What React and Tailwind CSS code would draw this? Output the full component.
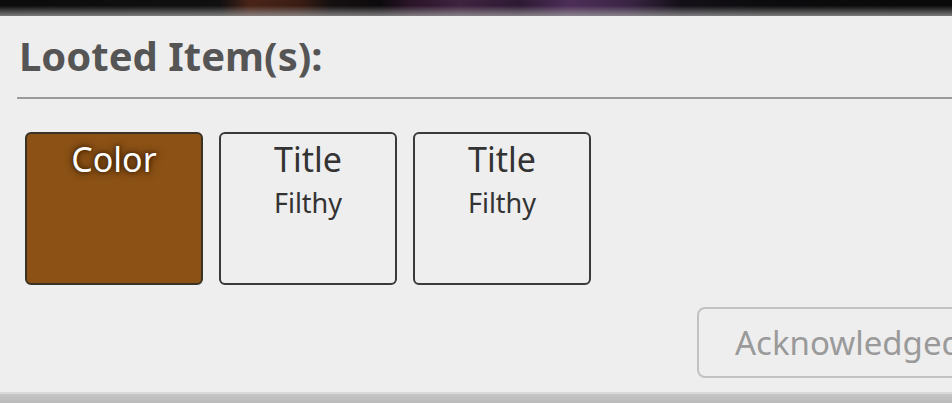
export default function App() {
  const font = "font-['Noto_Sans','Open_Sans',sans-serif]";
  return (
    <div className={`w-[952px] h-[403px] overflow-hidden flex flex-col bg-[#c2c2c2] ${font}`}>
      <div className="h-4 shrink-0 relative bg-[linear-gradient(90deg,#0c0c0c_0px,#101010_220px,#4a2418_250px,#3a1d14_300px,#151010_330px,#0d0a0d_380px,#2a1428_410px,#3f2340_460px,#2e1a34_520px,#4d2e58_570px,#3a2444_630px,#141018_680px,#0c0c0e_760px,#0a0a0a_952px)]">
        <div className="absolute inset-0 bg-[linear-gradient(180deg,rgba(0,0,0,0)_0%,rgba(0,0,0,0)_35%,rgba(160,160,160,0.75)_100%)]" />
      </div>
      <div className="h-[376px] shrink-0 bg-[#eeeeee] flex flex-col">
        <div className="pt-5 pl-[19px] text-[40px] leading-none font-bold text-[#555555] whitespace-nowrap">
          Looted Item(s):
        </div>
        <div className="mt-[21px] ml-[17px] h-[2px] bg-[#9a9a9a]" />
        <div className="mt-[33px] ml-[25px] flex gap-4">
          <div className="w-[178px] h-[153px] rounded-md border-2 border-[#3b3226] bg-[#8b5115] flex flex-col items-center pt-2">
            <div className="text-[34px] leading-none text-white [text-shadow:0_0_8px_#3a1f05,0_0_4px_#3a1f05]">Color</div>
          </div>
          {[0, 1].map((i) => (
            <div key={i} className="w-[178px] h-[153px] rounded-md border-2 border-[#3a3a3a] bg-[#eeeeee] flex flex-col items-center pt-2 text-[#333333]">
              <div className="text-[34px] leading-none">Title</div>
              <div className="mt-[13px] text-[27px] leading-none">Filthy</div>
            </div>
          ))}
        </div>
        <div className="mt-[22px] ml-[697px] flex">
          <div className="h-[71px] shrink-0 rounded-lg border-2 border-[#c2c2c2] flex items-center pl-9 pr-9 text-[33px] text-[#9a9a9a] whitespace-nowrap">
            Acknowledged
          </div>
        </div>
      </div>
      <div className="h-[2px] shrink-0 bg-[#d9d9d9]" />
      <div className="flex-1 bg-[linear-gradient(180deg,#c6c6c6,#bababa)]" />
    </div>
  );
}
